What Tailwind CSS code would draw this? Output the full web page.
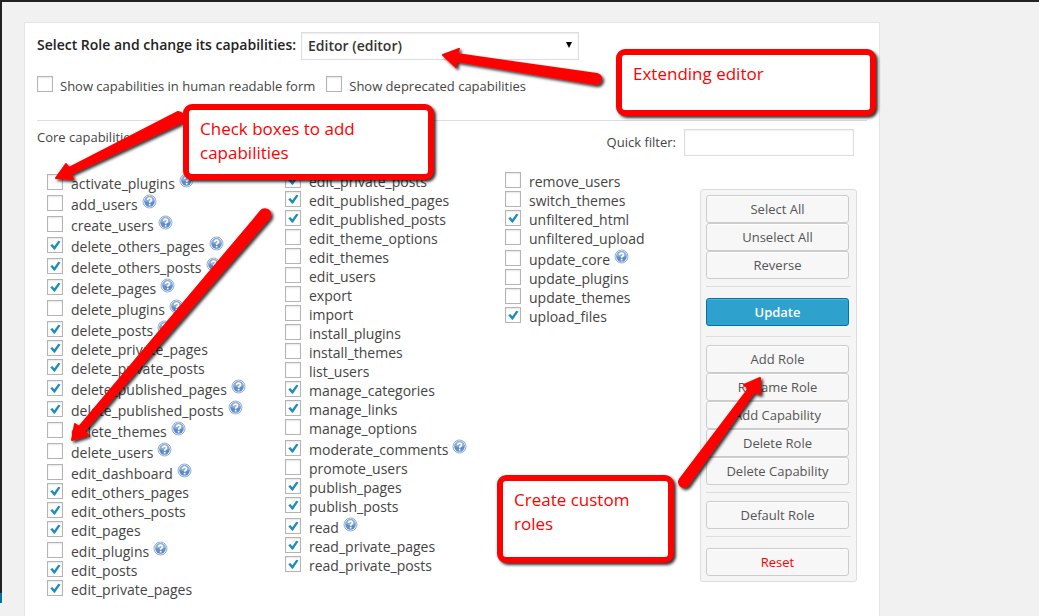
<!DOCTYPE html>
<html lang="en">
<head>
    <meta charset="UTF-8">
    <meta name="viewport" content="width=device-width, initial-scale=1.0">
    <title>User Role Editor</title>
    <script src="https://cdn.jsdelivr.net/npm/@tailwindcss/browser@4"></script>
</head>
<body class="relative flex min-h-screen flex-col overflow-x-hidden bg-[#f1f1f1] font-['Open_Sans',sans-serif] text-[13px] text-[#444]">
    <!-- Admin bar edge -->
    <div class="h-[2px] bg-[#222]"></div>

    <div class="flex flex-1">
        <!-- Admin menu edge -->
        <div class="flex w-[2px] flex-col pb-[13px]">
            <div class="flex-1 bg-[#222]"></div>
            <div class="h-[10px] bg-[#0074a2]"></div>
        </div>

        <!-- Role editor -->
        <main class="mt-5 mr-[159px] ml-[22px] flex-1 border border-b-0 border-[#e5e5e5] bg-white px-3 pt-[9px] pb-4">
            <div class="flex items-center gap-[5px] text-sm">
                <label for="role" class="w-[259px] whitespace-nowrap pb-[3px] font-semibold text-[#222]">Select Role and change its capabilities:</label>
                <div class="relative">
                    <select id="role" class="h-7 w-[278px] appearance-none border border-[#ddd] bg-white px-[6px] font-semibold text-[#333] shadow-[inset_0_1px_2px_rgba(0,0,0,0.07)]">
                        <option>Editor (editor)</option>
                    </select>
                    <svg class="pointer-events-none absolute top-[10px] right-[6px] h-[7px] w-2" viewBox="0 0 8 7"><path d="M1 0h6L4 6z" fill="#000"/></svg>
                </div>
            </div>

            <div id="options" class="mt-4 flex items-start gap-[11px]"></div>

            <hr class="mt-6 border-[#ddd]">

            <div class="flex justify-between pt-2 pr-[13px]">
                <h2 class="leading-4">Core capabilities:</h2>
                <div class="flex items-center gap-2">
                    <label for="filter">Quick filter:</label>
                    <input id="filter" type="text" class="h-[27px] w-[170px] border border-[#ddd] bg-white px-1 shadow-[inset_0_1px_2px_rgba(0,0,0,0.07)]">
                </div>
            </div>

            <div class="mt-4 flex justify-between pr-[10px] pl-[10px]">
                <!-- Capability columns -->
                <div class="grid grid-cols-[238px_220px_auto] items-start text-sm">
                    <div id="caps-1"></div>
                    <div id="caps-2"></div>
                    <div id="caps-3"></div>
                </div>

                <!-- Toolbar -->
                <div id="toolbar" class="mt-[17px] flex w-[157px] flex-col self-start rounded-[3px] border border-[#ddd] bg-[#f5f5f5] p-[5px]"></div>
            </div>
        </main>
    </div>

    <!-- Annotations -->
    <svg class="pointer-events-none absolute top-0 left-0" width="1039" height="616" viewBox="0 0 1039 616" fill="red" stroke="red" stroke-linejoin="round">
        <defs>
            <filter id="shadow" filterUnits="userSpaceOnUse" x="0" y="0" width="1039" height="616">
                <feDropShadow dx="2" dy="2" stdDeviation="1.500" flood-color="#000" flood-opacity="0.8"/>
            </filter>
        </defs>
        <g filter="url(#shadow)">
            <path d="M70 174 L182 122 A6 6 0 0 0 178 112 L69 168 L66 164 L56 178 L73 179z" stroke-width="2"/>
            <path d="M456 61 L595 84 A5 5 0 0 0 597 74 L457 54 L459 49 L443 55 L456 67z" stroke-width="2"/>
            <path d="M84 431 L269 218 A5 5 0 0 0 261 211 L79 427 L75 424 L72 440 L88 435z" stroke-width="2"/>
            <path d="M754 392 L688 485 A5 5 0 0 1 680 479 L749 388 L744 385 L760 378 L760 394z" stroke-width="2"/>
        </g>
    </svg>
    <div class="absolute top-[104px] left-[183px] h-[76px] w-[251px] rounded-[9px] border-6 border-[red] bg-white px-[11px] py-[7px] text-[17px] leading-6 text-[red] shadow-[2px_2px_3px_rgba(0,0,0,0.8)]">Check boxes to add<br>capabilities</div>
    <div class="absolute top-[49px] left-[616px] h-[67px] w-[260px] rounded-[9px] border-6 border-[red] bg-white px-[11px] py-[7px] text-[17px] leading-6 text-[red] shadow-[2px_2px_3px_rgba(0,0,0,0.8)]">Extending editor</div>
    <div class="absolute top-[475px] left-[497px] h-[88px] w-[177px] rounded-[9px] border-6 border-[red] bg-white px-[11px] py-[7px] text-[17px] leading-6 text-[red] shadow-[2px_2px_3px_rgba(0,0,0,0.8)]">Create custom<br>roles</div>

    <script>
        // "*" marks a granted capability, "?" one that has a help link
        const columns = {
            "caps-1": [
                "activate_plugins?", "add_users?", "create_users?", "delete_others_pages*?", "delete_others_posts*?",
                "delete_pages*?", "delete_plugins?", "delete_posts*?", "delete_private_pages*", "delete_private_posts*",
                "delete_published_pages*?", "delete_published_posts*?", "delete_themes?", "delete_users?",
                "edit_dashboard?", "edit_others_pages*", "edit_others_posts*", "edit_pages*", "edit_plugins?",
                "edit_posts*", "edit_private_pages*"
            ],
            "caps-2": [
                "edit_private_posts*", "edit_published_pages*", "edit_published_posts*", "edit_theme_options",
                "edit_themes", "edit_users", "export", "import", "install_plugins", "install_themes", "list_users",
                "manage_categories*", "manage_links*", "manage_options", "moderate_comments*?", "promote_users",
                "publish_pages*", "publish_posts*", "read*?", "read_private_pages*", "read_private_posts*"
            ],
            "caps-3": [
                "remove_users", "switch_themes", "unfiltered_html*", "unfiltered_upload", "update_core?",
                "update_plugins", "update_themes", "upload_files*"
            ]
        };

        function checkbox(id, checked) {
            return `<span class="grid">
                <input type="checkbox" id="${id}" ${checked ? "checked" : ""} class="peer col-start-1 row-start-1 size-4 appearance-none border border-[#b4b4b4] bg-white shadow-[inset_0_1px_2px_rgba(0,0,0,0.1)]">
                <svg class="pointer-events-none col-start-1 row-start-1 hidden size-4 peer-checked:block" viewBox="0 0 16 16"><path d="M3.300 8.200 5.300 7l2 2.300 4-5.600 2.200.8-5.600 8.200H7z" fill="#1e8cbe"/></svg>
            </span>`;
        }

        const helpLink = `<a href="#" aria-label="Help" class="-ml-1 self-start pt-px">
            <svg class="size-[15px]" viewBox="0 0 15 15">
                <circle cx="7.500" cy="7.500" r="6.500" fill="#eef3fa" stroke="#94aed3"/>
                <circle cx="7.500" cy="7.500" r="5.200" fill="#5e8cc6"/>
                <path d="M2.500 7a5 5 0 0 1 10 0c-3 1.300-6.500 1.300-10 0z" fill="#8eb0db"/>
                <path d="M5.600 6c0-2.600 4-2.400 3.900 0C9.500 7.300 7.600 7.200 7.600 8.800" fill="none" stroke="#fff" stroke-width="1.600"/>
                <rect x="6.800" y="9.800" width="1.700" height="1.700" fill="#fff"/>
            </svg>
        </a>`;

        for (const [id, caps] of Object.entries(columns)) {
            document.getElementById(id).innerHTML = caps.map(cap => {
                const name = cap.replace(/[*?]/g, "");
                const help = cap.includes("?");
                return `<div class="flex items-end gap-2 ${help ? "h-[21px]" : "h-[19px]"}">
                    <span class="pb-[3px]">${checkbox(name, cap.includes("*"))}</span>
                    <label for="${name}" class="leading-[19px]">${name}</label>
                    ${help ? helpLink : ""}
                </div>`;
            }).join("");
        }

        const options = { human: "Show capabilities in human readable form", deprecated: "Show deprecated capabilities" };
        document.getElementById("options").innerHTML = Object.entries(options).map(([id, text]) =>
            `<div class="flex gap-[7px]">${checkbox(id, false)}<label for="${id}" class="leading-5">${text}</label></div>`
        ).join("");

        const groups = [
            ["Select All", "Unselect All", "Reverse"],
            ["Update"],
            ["Add Role", "Rename Role", "Add Capability", "Delete Role", "Delete Capability"],
            ["Default Role"],
            ["Reset"]
        ];
        const buttonStyles = {
            "Update": "border-[#0074a2] bg-[#2ea2cc] font-semibold text-white shadow-[inset_0_1px_0_rgba(120,200,230,0.5)]",
            "Reset": "border-[#ccc] bg-[#f7f7f7] text-[red] shadow-[inset_0_1px_0_#fff]"
        };
        const plainButton = "border-[#ccc] bg-[#f7f7f7] text-[#555] shadow-[inset_0_1px_0_#fff]";
        // Wider space above the Update and Reset buttons
        const rules = ["", "mt-[7px] mb-[11px]", "mt-[10px] mb-2", "mt-[7px] mb-2", "mt-[7px] mb-[11px]"];
        document.getElementById("toolbar").innerHTML = groups.map((names, i) =>
            (i ? `<hr class="border-[#ddd] ${rules[i]}">` : "") +
            names.map(name => `<button type="button" class="mr-[2px] h-7 rounded-[3px] border leading-4 ${buttonStyles[name] || plainButton}">${name}</button>`).join("")
        ).join("");
    </script>
</body>
</html>
